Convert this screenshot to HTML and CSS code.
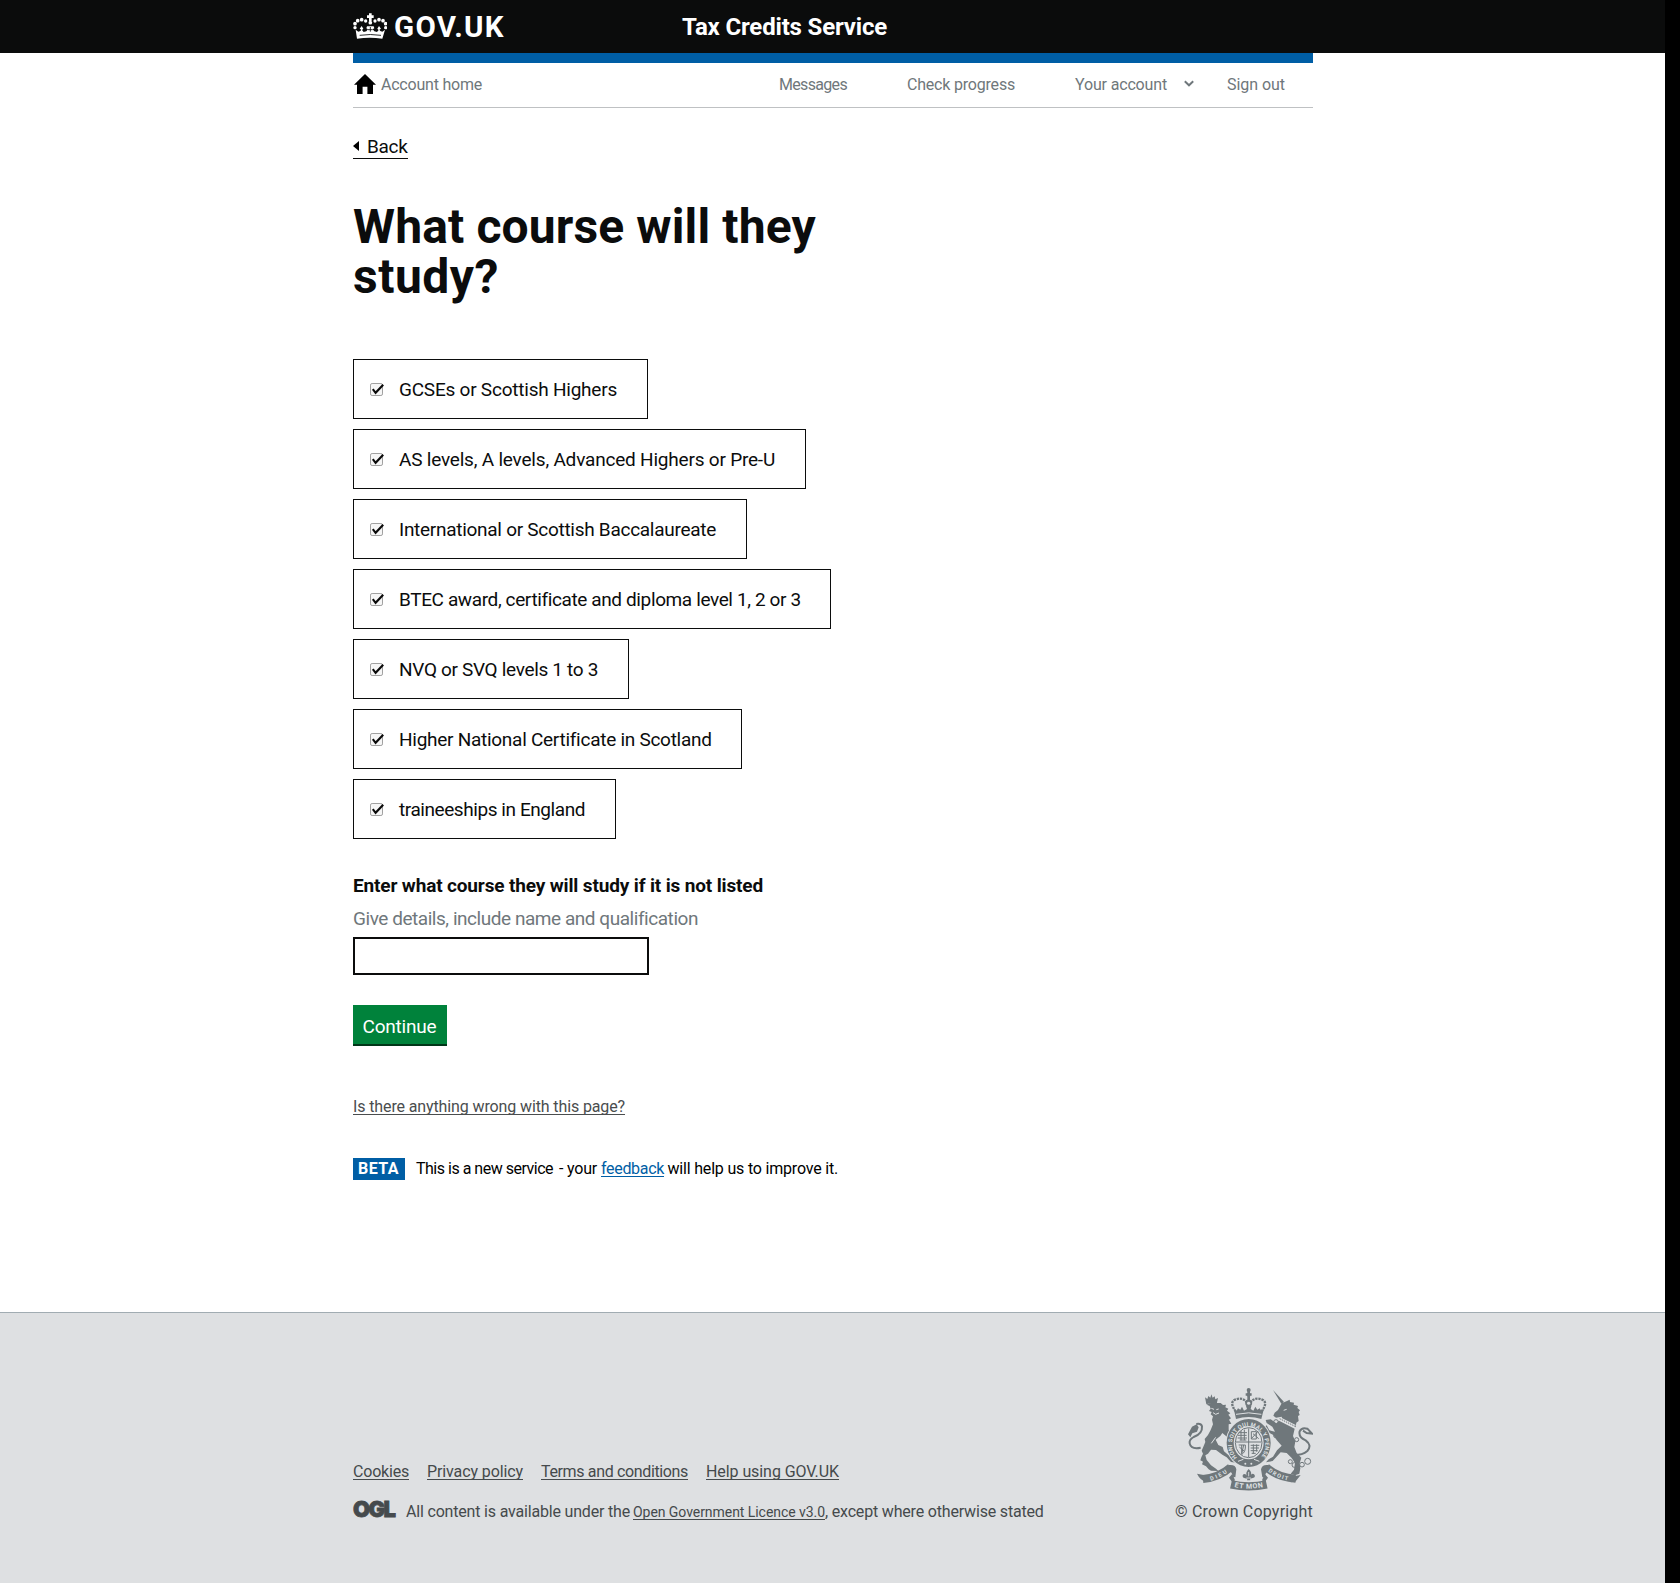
FILE: index.html
```html
<!DOCTYPE html>
<html lang="en">
<head>
<meta charset="utf-8">
<title>What course will they study? - Tax Credits Service</title>
<link rel="stylesheet" href="styles.css">
</head>
<body>
<svg class="defs" width="0" height="0" aria-hidden="true">
  <symbol id="tick" viewBox="0 0 14 13">
    <rect x=".5" y=".5" width="12" height="12" rx="1.6" fill="#f6f6f6" stroke="#a0a0a0"/>
    <path d="M2.8 6.2 5.6 9.8 13.2 1.8" fill="none" stroke="#0a0a0a" stroke-width="2.1"/>
  </symbol>
</svg>

<header class="header">
  <div class="wrap header-row">
    <a class="logo" href="#">
      <svg class="crown" viewBox="0 0 102 78" aria-hidden="true">
        <g fill="#fff">
          <path d="M48 1h8v6h6v8h-6v9h-8v-9h-6V7h6z"/>
          <circle cx="52" cy="29" r="5.5"/>
          <circle cx="38" cy="24" r="5"/><circle cx="26" cy="20" r="5.500"/><circle cx="14" cy="23" r="5.500"/><circle cx="6" cy="32" r="5.500"/><circle cx="6" cy="44" r="5"/>
          <circle cx="66" cy="24" r="5"/><circle cx="78" cy="20" r="5.500"/><circle cx="90" cy="23" r="5.500"/><circle cx="98" cy="32" r="5.500"/><circle cx="98" cy="44" r="5"/>
          <path d="M8 50l8 6 6-2 3-4-5-3 6-8 5 8-4 4 5 6 8-2 5-6-5-3 2-6h20l2 6-5 3 5 6 8 2 5-6-4-4 5-8 6 8-5 3 3 4 6 2 8-6-8 27q-38-5-76 0z"/>
        </g>
        <path d="M20 67q32-5 64 0M52 42v14M45 50h14" fill="none" stroke="#0b0c0c" stroke-width="2.6"/>
      </svg>
      <span class="logo-text">GOV.UK</span>
    </a>
    <a class="service" href="#">Tax Credits Service</a>
  </div>
</header>

<div class="wrap">
  <nav class="nav">
    <a class="home" href="#">
      <svg class="home-icon" viewBox="0 0 22 20" aria-hidden="true"><path d="M11 0 22 10.7H19V20H13.400V12.800H8.600V20H3V10.700H0z"/></svg>
      <span class="t-home">Account home</span>
    </a>
    <div class="nav-links">
      <a class="t-messages" href="#">Messages</a>
      <a class="t-check" href="#">Check progress</a>
      <a class="t-account" href="#">Your account</a>
      <svg class="chevron" viewBox="0 0 10 7" aria-hidden="true"><path d="M.8 1.200 5 5.300 9.200 1.200" fill="none" stroke="#6f777b" stroke-width="1.900"/></svg>
      <a class="t-signout" href="#">Sign out</a>
    </div>
  </nav>

  <main>
    <a class="back" href="#"><svg class="back-arrow" viewBox="0 0 6 10" aria-hidden="true"><path d="M6 0v10L0 5z"/></svg><span>Back</span></a>
    <h1>What course will they<br><span class="h1-end">study?</span></h1>

    <form>
      <div class="choices">
        <label class="choice c-gcse"><svg class="tick"><use href="#tick"/></svg><span>GCSEs or Scottish Highers</span></label>
        <label class="choice c-as"><svg class="tick"><use href="#tick"/></svg><span>AS levels, A levels, Advanced Highers or Pre-U</span></label>
        <label class="choice c-ib"><svg class="tick"><use href="#tick"/></svg><span>International or Scottish Baccalaureate</span></label>
        <label class="choice c-btec"><svg class="tick"><use href="#tick"/></svg><span>BTEC award, certificate and diploma level 1, 2 or 3</span></label>
        <label class="choice c-nvq"><svg class="tick"><use href="#tick"/></svg><span>NVQ or SVQ levels 1 to 3</span></label>
        <label class="choice c-hnc"><svg class="tick"><use href="#tick"/></svg><span>Higher National Certificate in Scotland</span></label>
        <label class="choice c-train"><svg class="tick"><use href="#tick"/></svg><span>traineeships in England</span></label>
      </div>
      <label class="field-label" for="course">Enter what course they will study if it is not listed</label>
      <span class="hint">Give details, include name and qualification</span>
      <input class="text-input" id="course" type="text">
      <button class="button" type="button">Continue</button>
    </form>

    <a class="report" href="#">Is there anything wrong with this page?</a>

    <div class="phase">
      <strong class="tag">BETA</strong>
      <span class="t-new">This is a new service</span>
      <span class="t-your">- your</span>
      <a class="feedback" href="#">feedback</a>
      <span class="t-will">will help us to improve it.</span>
    </div>
  </main>
</div>

<footer class="footer">
  <div class="wrap footer-row">
    <div class="footer-meta">
      <div class="footer-links">
        <a class="f-cookies" href="#">Cookies</a>
        <a class="f-privacy" href="#">Privacy policy</a>
        <a class="f-terms" href="#">Terms and conditions</a>
        <a class="f-help" href="#">Help using GOV.UK</a>
      </div>
      <div class="licence">
        <span class="ogl">OGL</span>
        <span class="l-all">All content is available under the</span>
        <a class="l-link" href="#">Open Government Licence v3.0</a>
        <span class="l-except">, except where otherwise stated</span>
      </div>
    </div>
    <div class="copyright">
      <svg class="crest" viewBox="82 50 378 312" aria-hidden="true">
        <defs>
          <path id="garter" d="M232 262A50 55 0 1 1 302 262"/>
          <path id="dieu" d="M153 331Q182 323 208 303"/>
          <path id="etmon" d="M224 350Q267 360 312 350"/>
          <path id="droit" d="M325 303Q350 324 388 331"/>
        </defs>
        <g class="fill">
          <!-- lion -->
          <path d="M136 81l7 5 3-9 6 5 3-10 4 10 6-4 2 9 8-4-4 18q-16-5-31 1z"/>
          <path d="M141 103q10-8 28-5l14 0 7 6 9-1-2 8 9 4-4 6 10 8-6 4 8 11-6 4 7 12-8 2 0 16 11 13 10 6-7 4 5 7-14-1-14-11-10-8-6 9-14 11 8 16 13 6 4 13 13 11 11 8 13-2 7 7 5 12-28-4-13-14-13-8-19-14-15-1-9 12-8 5 4 14 13 16 15 10 7 7-22-1-7-4-8-9-12-6 3-8-8-4 3-9 5-11-4-9 11-26-2-9 10-12 8-15 7-17-3-14 3-10-7-6 3-7-8-3 5-7-3-8z"/>
          <path d="M85 192l12-23 14-7 6 9-5 13-14 5-6 12z"/>
          <!-- unicorn -->
          <path d="M340 59l33 36-8 5z"/>
          <path d="M366 99l16-7 8-4 1 7 12 2-1 6 13 4-2 6 8 7-4 5 3 9-5 3 2 15-7 5-2 14-39-19-3-13-17 3-8-6 4-9 10-8z"/>
          <path d="M358 151l47 24-5 22 7 16-3 17 7 18 14 14-5 17 2 15-3 16-13 5-13-5 10-12 3-20-10-15-15-15-18-2-15 16-9 10-20 4 8-9 13-8 12-19 14-14-15-17-10-15-19-10-9-13 8-6 8 15 17 4-8-15-17-11-3-9 15-2 17 12z"/>
          <!-- royal crown -->
          <circle cx="267" cy="59" r="6"/><circle cx="267" cy="73" r="6"/>
          <path d="M263 58h8v36h-8zM258 69h18v7h-18z"/>
          <path d="M222 114l8 8 5-8 7 4 5-9 6 12 9-5-3-9h16l-2 9 8 5 6-12 6 9 7-4 5 8 8-8-8 32q-38-12-76 0z"/>
          <!-- ribbon folds -->
          <path d="M112 310l20 4 8 20q-18-3-28-24zM208 284q20-2 22 13l-3 24-8-2q0-15-14-17zM325 284q-18-2-21 13l4 24 8-2q0-15 14-17zM403 318l20-4-16 20-14 2z"/>
          <path d="M208 322l10-12 8 20-8 6zM325 322l-10-12-8 20 8 6z"/>
        </g>
        <g class="line">
          <path d="M130 326Q178 322 213 291" stroke-width="24"/>
          <path d="M214 342Q267 354 321 342" stroke-width="25"/>
          <path d="M320 291Q355 322 408 325" stroke-width="24"/>
          <path d="M123 232q-29 6-33-13-2-11 12-19 27-10 25-32-3-10-17-7" stroke-width="6"/>
          <path d="M398 254q28 2 45-12 15-17-5-32-22-9-18-27 6-13 23-8l14 15-16-2-11-7" stroke-width="6"/>
          <path d="M229 124q-20-26-5-35 24-11 38 8M305 124q20-26 5-35-24-11-38 8" stroke-width="7" stroke-dasharray="7 2.500"/>
          <circle cx="267" cy="98" r="8" stroke-width="5"/>
          <circle cx="392" cy="274" r="6"/><circle cx="404" cy="284" r="7"/><circle cx="427" cy="283" r="7"/><circle cx="444" cy="273" r="9"/><circle cx="411" cy="208" r="6"/><circle cx="349" cy="155" r="7"/><circle cx="348" cy="196" r="6"/>
        </g>
        <path class="gap" d="M360 145l46 23" stroke-width="9"/>
        <path class="line" d="M360 145l46 23" stroke-width="5" stroke-dasharray="4 3"/>
        <path class="gap" d="M155 114l8 3m7 1 7-2M160 127l8 5 10-4M372 120l9-3M155 219l13-18M229 132q38-9 76 0" stroke-width="3"/>
        <!-- shield and garter -->
        <ellipse class="gap-fill" cx="267" cy="218" rx="69" ry="75"/>
        <ellipse class="fill" cx="267" cy="218" rx="66" ry="72"/>
        <ellipse class="gap-fill" cx="267" cy="217" rx="45" ry="50"/>
        <ellipse class="line" cx="267" cy="217" rx="40" ry="45" stroke-width="4"/>
        <path class="line" d="M267 174v86M229 215h76" stroke-width="5"/>
        <path class="line" d="M238 187h24M235 195h26M234 203h28M240 209h20M244 182v28M254 178v32" stroke-width="4"/>
        <path class="line" d="M275 184h15v22h-15zM280 190l17 15M275 205l20-22M273 225h26M273 233h25M273 241h21M276 249h12M281 222v28M291 222v22" stroke-width="4"/>
        <path class="line" d="M237 224h20q2 20-11 29M239 230l14 12M246 224v26M252 224l-6 28" stroke-width="3"/>
        <path class="gap" d="M235 273l16-6M299 273l-16-6" stroke-width="3"/>
        <circle class="gap-fill" cx="257" cy="280" r="3"/><circle class="gap-fill" cx="275" cy="280" r="3"/>
        <!-- fleur-de-lis -->
        <path class="fill" d="M267 296q14 13 3 22 7-13 15-4 3 8-8 10l-6 1 1 5h-10l1-5q-16 0-14-10 5-10 15 3-10-9 3-22z"/>
        <path class="gap" d="M267 305v13M260 323h14" stroke-width="2.500"/>
        <text class="motto" font-size="17"><textPath href="#garter" textLength="246">HONI SOIT QUI MAL Y PENSE</textPath></text>
        <text class="motto" font-size="17"><textPath href="#dieu" textLength="56">DIEU</textPath></text>
        <text class="motto" font-size="21"><textPath href="#etmon" textLength="87">ET MON</textPath></text>
        <text class="motto" font-size="17"><textPath href="#droit" textLength="66">DROIT</textPath></text>
      </svg>
      <a class="t-copy" href="#">© Crown Copyright</a>
    </div>
  </div>
</footer>
</body>
</html>
```
FILE: styles.css
```css
* { box-sizing: border-box; }

html { background: #000; }

body {
  width: 1665px;
  min-height: 1583px;
  margin: 0;
  display: flex;
  flex-direction: column;
  background: #fff;
  color: #0b0c0c;
  font: 400 16px/20px Roboto, "Liberation Sans", sans-serif;
  white-space: nowrap;
}

a { color: inherit; text-decoration: none; }
svg { display: block; flex: none; }
.defs { position: absolute; }

.wrap { width: 960px; margin: 0 352px 0 353px; }

/* Header */
.header { width: 100%; height: 53px; background: #0b0c0c; color: #fff; line-height: 55px; font-weight: 700; }
.header-row { display: flex; }
.logo { display: flex; width: 329px; gap: 7px; }
.crown { width: 34px; height: 26px; margin-top: 13px; }
.logo-text { font-size: 29.5px; letter-spacing: 1.3px; }
.service { font-size: 24px; letter-spacing: -0.176px; }

/* Account navigation */
.nav {
  display: flex;
  justify-content: space-between;
  height: 55px;
  border-top: 10px solid #005ea5;
  border-bottom: 1px solid #bfc1c3;
  color: #6f777b;
  line-height: 43px;
}
.home { display: flex; padding-left: 1px; gap: 5px; }
.home-icon { width: 22px; height: 20px; margin-top: 11px; fill: #000; }
.nav-links { display: flex; padding-right: 28px; }
.t-home { letter-spacing: -0.219px; }
.t-messages { width: 128px; letter-spacing: -0.675px; }
.t-check { width: 168px; letter-spacing: -0.2px; }
.t-account { width: 109px; letter-spacing: -0.159px; }
.chevron { width: 10px; height: 7px; margin: 17px 33px 0 0; }
.t-signout { width: 58px; letter-spacing: -0.045px; }

/* Page content */
.back {
  display: flex;
  width: 55px;
  height: 25px;
  margin-top: 26px;
  gap: 8px;
  border-bottom: 1px solid #0b0c0c;
  font-size: 19px;
  line-height: 26px;
  letter-spacing: -0.312px;
}
.back-arrow { width: 6px; height: 10px; margin-top: 7px; }
h1 { margin: 43px 0 57px; font-size: 48px; line-height: 50px; font-weight: 700; letter-spacing: 0.13px; }
.h1-end { letter-spacing: 0.5px; }

form { font-size: 19px; line-height: 25px; }
.choices { display: flex; flex-direction: column; align-items: flex-start; gap: 10px; }
.choice {
  display: flex;
  align-items: center;
  gap: 15px;
  height: 60px;
  padding-left: 16px;
  border: 1px solid #0b0c0c;
}
.tick { width: 14px; height: 13px; }
.c-gcse { width: 295px; letter-spacing: -0.225px; }
.c-as { width: 453px; letter-spacing: -0.204px; }
.c-ib { width: 394px; letter-spacing: -0.28px; }
.c-btec { width: 478px; letter-spacing: -0.381px; }
.c-nvq { width: 276px; letter-spacing: -0.328px; }
.c-hnc { width: 389px; letter-spacing: -0.27px; }
.c-train { width: 263px; letter-spacing: -0.431px; }

.field-label { display: block; margin-top: 34px; font-weight: 700; letter-spacing: -0.144px; }
.hint { display: block; margin-top: 8px; color: #6f777b; letter-spacing: -0.455px; }
.text-input { display: block; width: 296px; height: 38px; margin-top: 6px; border: 2px solid #0b0c0c; background: #fff; }
.button {
  display: block;
  width: 94px;
  height: 39px;
  margin-top: 30px;
  padding: 4px 1px 0 0;
  border: 0;
  background: #00823b;
  box-shadow: 0 2px 0 #003618;
  color: #fff;
  font: 400 19px/35px Roboto, "Liberation Sans", sans-serif;
  letter-spacing: -0.197px;
}

.report, .feedback, .footer-links a, .l-link {
  text-decoration: underline;
  text-decoration-thickness: 1px;
  text-underline-offset: 2px;
  text-decoration-skip-ink: none;
}
.report { display: block; width: 272px; margin-top: 53px; color: #4a4d4e; letter-spacing: -0.12px; }

.phase { display: flex; height: 22px; margin-top: 41px; line-height: 21px; color: #000; }
.tag { width: 52px; margin-right: 11px; padding-left: 5px; background: #005ea5; color: #fff; letter-spacing: 0.451px; }
.t-new { width: 143px; letter-spacing: -0.494px; }
.t-your { width: 42px; letter-spacing: -0.202px; }
.feedback { margin-right: 3.500px; color: #005ea5; letter-spacing: -0.317px; }
.t-will { letter-spacing: -0.191px; }

/* Footer */
.footer { flex: 1; margin-top: 132px; border-top: 1px solid #a1acb2; background: #dee0e2; color: #454a4c; }
.footer-row { display: flex; justify-content: space-between; align-items: flex-end; padding-top: 74px; }
.footer-links { display: flex; gap: 18px; margin-bottom: 20px; }
.f-cookies { letter-spacing: -0.201px; }
.f-privacy { letter-spacing: -0.107px; }
.f-terms { letter-spacing: -0.353px; }
.f-help { letter-spacing: -0.076px; }
.licence { display: flex; }
.ogl { width: 53px; font-family: Inter, "Liberation Sans", sans-serif; font-size: 22px; font-weight: 900; letter-spacing: -1.600px; line-height: 15px; -webkit-text-stroke: 0.800px #454a4c; }
.l-all { width: 227px; letter-spacing: -0.183px; }
.l-link { font-size: 14px; line-height: 21px; letter-spacing: -0.053px; }
.l-except { letter-spacing: -0.18px; }
.copyright { display: flex; flex-direction: column; align-items: flex-end; }
.t-copy { margin-bottom: 1px; letter-spacing: 0.2px; }

/* Royal coat of arms */
.crest { width: 126px; height: 104px; margin-bottom: 11px; }
.fill { fill: #6f777b; }
.gap-fill { fill: #dee0e2; }
.line { fill: none; stroke: #6f777b; stroke-width: 3; }
.gap { fill: none; stroke: #dee0e2; }
.motto { fill: #dee0e2; font-family: Roboto, "Liberation Sans", sans-serif; font-weight: 700; }
```
